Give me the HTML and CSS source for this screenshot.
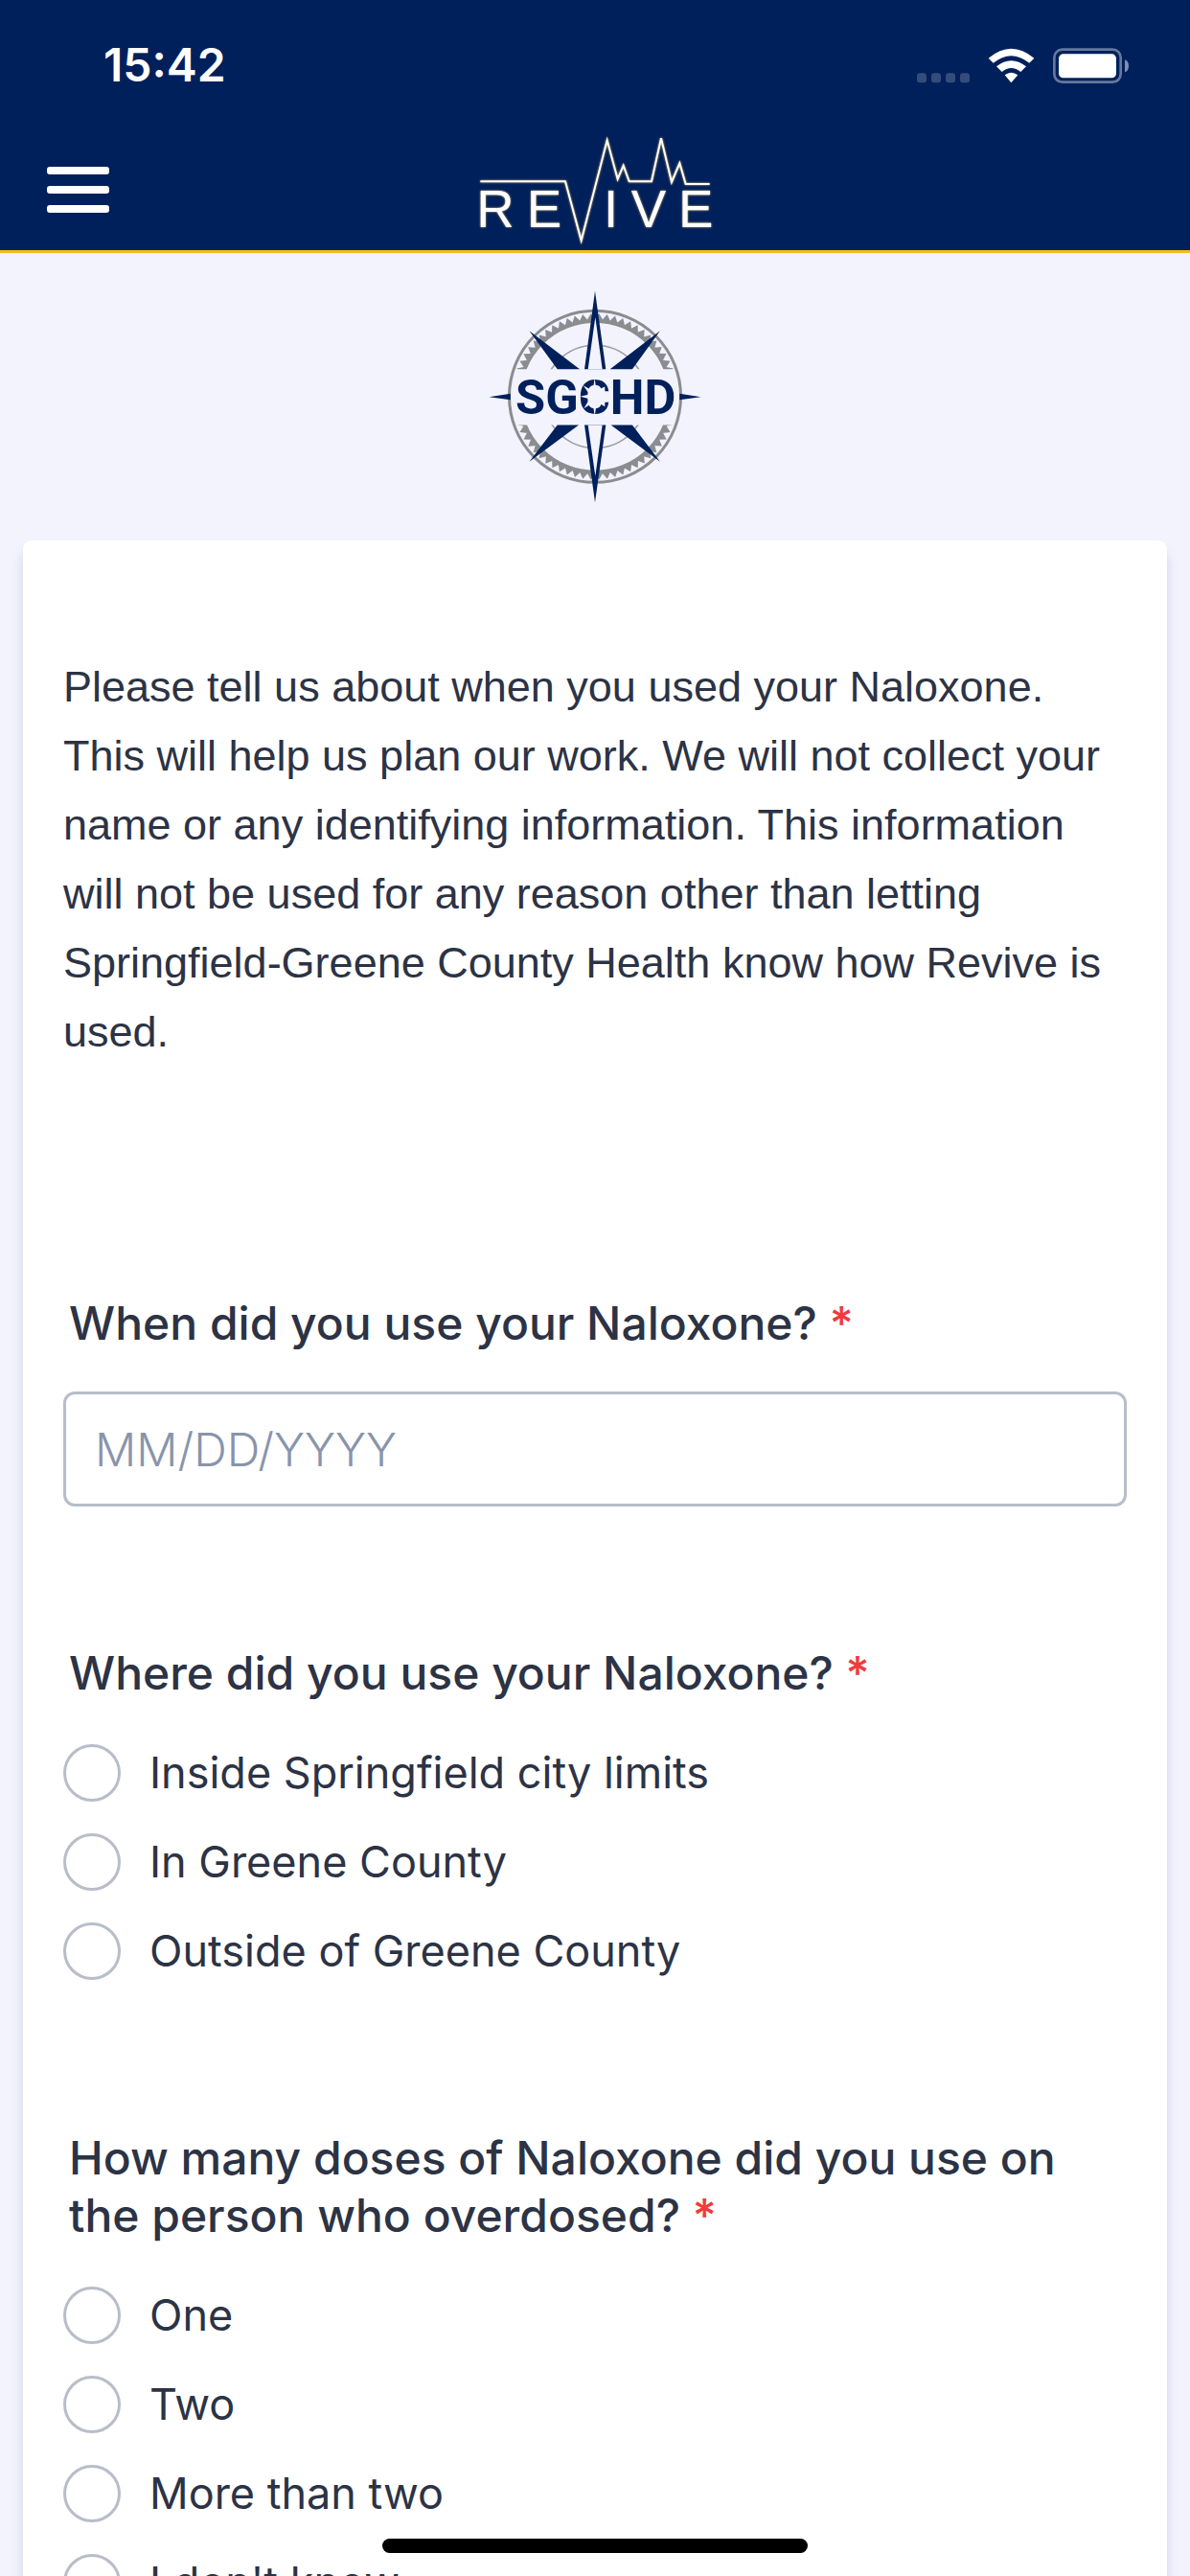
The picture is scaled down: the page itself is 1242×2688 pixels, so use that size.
FILE: index.html
```html
<!DOCTYPE html>
<html lang="en">
  <head>
    <meta charset="UTF-8" />
    <meta name="viewport" content="width=device-width, initial-scale=1.0" />
    <title>Revive - Naloxone Use</title>
    <link rel="stylesheet" href="styles.css">
  </head>
  <body>
    <header class="header">
      <div class="status-bar">
        <span class="time">15:42</span>
        <svg class="status-icons" viewBox="81 50 663 120" aria-hidden="true">
          <g fill="#fff" fill-opacity="0.2">
            <rect x="81" y="135" width="30" height="30" rx="9" />
            <rect x="126" y="135" width="30" height="30" rx="9" />
            <rect x="171" y="135" width="30" height="30" rx="9" />
            <rect x="216" y="135" width="30" height="30" rx="9" />
          </g>
          <g fill="#fff">
            <path d="M305 88 Q376 28 448 88 L433 103 Q376 58 320 103 Z" />
            <path d="M330 114 Q376 77 423 114 L406 131 Q376 107 347 131 Z" />
            <path d="M356 141 Q376 125 397 141 L376 165 Z" />
          </g>
          <rect x="511" y="61" width="208" height="102" rx="25" fill="none" stroke="#fff" stroke-opacity="0.4" stroke-width="8" />
          <rect x="525" y="75" width="180" height="75" rx="14" fill="#fff" />
          <path d="M732 93 Q744 98 744 112 Q744 127 732 132 Z" fill="#fff" fill-opacity="0.5" />
        </svg>
      </div>
      <nav class="navbar">
        <button class="menu-btn" type="button" aria-label="Open menu">
          <span class="bar"></span>
          <span class="bar"></span>
          <span class="bar"></span>
        </button>
        <svg class="revive-logo" viewBox="60 32 726 345" role="img" aria-label="Revive">
          <path class="pulse" d="M64 177H330L380 362L461 48L494 170L512 127L530 177H600L630 42L663 179L688 120L707 185H782" />
          <text class="revive-text" y="320" x="52 209 450 536 684">REIVE</text>
        </svg>
      </nav>
    </header>

    <main class="content">
      <svg class="sgchd-logo" viewBox="30 38 666 667" role="img" aria-label="SGCHD">
        <defs>
          <clipPath id="halves">
            <rect x="30" y="38" width="666" height="247" />
            <rect x="30" y="460" width="666" height="247" />
          </clipPath>
          <path id="tooth" d="M349 132L363 110L377 132Z" />
          <g id="teeth4">
            <use href="#tooth" transform="rotate(2.8 363 371)" />
            <use href="#tooth" transform="rotate(8.4 363 371)" />
            <use href="#tooth" transform="rotate(14 363 371)" />
            <use href="#tooth" transform="rotate(19.7 363 371)" />
          </g>
          <g id="teeth16">
            <use href="#teeth4" />
            <use href="#teeth4" transform="rotate(22.5 363 371)" />
            <use href="#teeth4" transform="rotate(45 363 371)" />
            <use href="#teeth4" transform="rotate(67.5 363 371)" />
          </g>
        </defs>
        <circle cx="363" cy="371" r="269" fill="none" stroke="#8a8d8f" stroke-width="9" />
        <g clip-path="url(#halves)" fill="#8a8d8f">
          <circle cx="363" cy="371" r="236" fill="none" stroke="#8a8d8f" stroke-width="10" />
          <use href="#teeth16" />
          <use href="#teeth16" transform="rotate(90 363 371)" />
          <use href="#teeth16" transform="rotate(180 363 371)" />
          <use href="#teeth16" transform="rotate(270 363 371)" />
          <circle cx="363" cy="371" r="161" fill="none" stroke="#9b9ea3" stroke-width="5" />
        </g>
        <g fill="#00205b">
          <path d="M363 40L397 285H330Z" />
          <path d="M363 703L397 460H330Z" />
          <path d="M567 165L480 285H410Z" />
          <path d="M157 165L245 285H315Z" />
          <path d="M567 575L480 460H413Z" />
          <path d="M157 575L245 460H312Z" />
          <path d="M695 372L628 362V381Z" />
          <path d="M31 372L98 362V381Z" />
        </g>
        <g fill="#f3f3fe">
          <path d="M364 122L386 285H341Z" />
          <path d="M364 620L386 460H341Z" />
        </g>
        <text class="sgchd-text" x="365" y="426" text-anchor="middle">SGCHD</text>
        <path d="M362 312L367 352L394 340V402L369 388L362 432L356 390L328 408L346 378L316 371L346 364L326 336L356 353Z" fill="#f3f3fe" />
      </svg>

      <form class="card">
        <p class="intro">
          Please tell us about when you used your Naloxone. This will help us
          plan our work. We will not collect your name or any identifying
          information. This information will not be used for any reason other
          than letting Springfield-Greene County Health know how Revive is used.
        </p>

        <div class="field">
          <label class="question" for="use-date">When did you use your Naloxone? <span class="required">*</span></label>
          <input class="date-input" id="use-date" type="text" placeholder="MM/DD/YYYY" />
        </div>

        <fieldset class="field">
          <legend class="question">Where did you use your Naloxone? <span class="required">*</span></legend>
          <div class="options">
            <label class="option"><input type="radio" name="place" /> Inside Springfield city limits</label>
            <label class="option"><input type="radio" name="place" /> In Greene County</label>
            <label class="option"><input type="radio" name="place" /> Outside of Greene County</label>
          </div>
        </fieldset>

        <fieldset class="field">
          <legend class="question">How many doses of Naloxone did you use on the person who overdosed? <span class="required">*</span></legend>
          <div class="options">
            <label class="option"><input type="radio" name="doses" /> One</label>
            <label class="option"><input type="radio" name="doses" /> Two</label>
            <label class="option"><input type="radio" name="doses" /> More than two</label>
            <label class="option"><input type="radio" name="doses" /> I don't know</label>
          </div>
        </fieldset>
      </form>
    </main>

    <div class="home-indicator"></div>
  </body>
</html>
```
FILE: styles.css
```css
* {
  margin: 0;
  padding: 0;
  box-sizing: border-box;
}
body {
  display: flex;
  flex-direction: column;
  height: 100vh;
  overflow: hidden;
  background-color: #f3f3fe;
  color: #2c3345;
  font-family: Inter, sans-serif;
}
.header {
  flex-shrink: 0;
  background-color: #00205b;
  border-bottom: 3px solid #f6b721;
}
.status-bar {
  display: flex;
  justify-content: space-between;
  align-items: center;
  height: 135px;
  padding: 0 64px 0 108px;
}
.time {
  color: white;
  font-size: 48px;
  font-weight: 600;
}
.status-icons {
  width: 221px;
  height: 40px;
}
.navbar {
  display: grid;
  grid-template-columns: 1fr auto 1fr;
  align-items: center;
  height: 126px;
  padding: 0 49px;
}
.menu-btn {
  display: flex;
  flex-direction: column;
  gap: 12px;
  width: 65px;
  background: none;
  border: none;
  cursor: pointer;
}
.bar {
  width: 100%;
  height: 8px;
  border-radius: 3px;
  background-color: white;
}
.revive-logo {
  width: 242px;
  height: 115px;
  overflow: visible;
  filter: drop-shadow(0 0 1px #d9b45a);
}
.pulse {
  fill: none;
  stroke: white;
  stroke-width: 6px;
}
.revive-text {
  fill: white;
  font-family: "Liberation Sans", Arial, sans-serif;
  font-size: 164px;
}
.content {
  flex: 1;
  min-height: 0;
  overflow: hidden;
  padding: 39px 24px 0;
}
.sgchd-logo {
  display: block;
  width: 222px;
  height: 222px;
  margin: 0 auto 39px;
}
.sgchd-text {
  fill: #00205b;
  font-family: Roboto, sans-serif;
  font-size: 152px;
  font-weight: bold;
}
.card {
  padding: 117px 42px 72px;
  background-color: white;
  border-radius: 9px;
  box-shadow: 0 12px 12px rgba(87, 100, 126, 0.21);
}
.intro {
  margin-bottom: 238px;
  font-family: "Liberation Sans", Arial, sans-serif;
  font-size: 45px;
  line-height: 72px;
}
.field {
  border: none;
  margin-bottom: 156px;
}
div.field {
  margin-bottom: 144px;
}
.question {
  display: block;
  padding: 0 6px;
  margin-bottom: 44px;
  font-size: 48px;
  font-weight: 500;
  line-height: 60px;
}
div.field .question {
  margin-bottom: 41px;
}
.required {
  color: #f23a3c;
}
.date-input {
  display: block;
  width: 100%;
  height: 120px;
  padding: 0 30px;
  border: 3px solid #b8bdc9;
  border-radius: 12px;
  color: #2c3345;
  font-family: inherit;
  font-size: 48px;
  font-weight: 300;
}
.date-input::placeholder {
  color: #8894ab;
}
.options {
  display: flex;
  flex-direction: column;
  gap: 33px;
}
.option {
  display: flex;
  align-items: center;
  gap: 30px;
  font-size: 45px;
  line-height: 60px;
}
.option input {
  appearance: none;
  flex-shrink: 0;
  width: 60px;
  height: 60px;
  border: 3px solid #b8bdc9;
  border-radius: 50%;
}
.option input:checked {
  border: 18px solid #00205b;
}
.home-indicator {
  position: fixed;
  bottom: 24px;
  left: 50%;
  width: 444px;
  height: 15px;
  margin-left: -222px;
  border-radius: 8px;
  background-color: black;
}
```
